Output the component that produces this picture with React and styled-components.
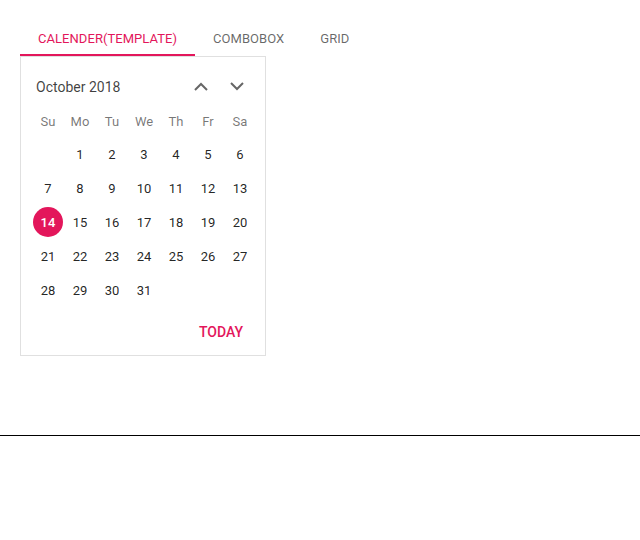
import React from "react";
import styled, { createGlobalStyle } from "styled-components";

const Global = createGlobalStyle`
  html, body { margin: 0; padding: 0; background: #fff; }
  body { font-family: Roboto, "Noto Sans", sans-serif; }
  * { box-sizing: border-box; }
`;

const PINK = "#e3165b";

const Section = styled.section`
  height: 436px;
  padding: 20px 20px 0;
  border-bottom: 1px solid #000;
`;

const TabBar = styled.div`
  display: flex;
  height: 36px;
`;

const Tab = styled.div`
  display: flex;
  align-items: center;
  padding: 2px 18px 0;
  font-size: 13px;
  font-weight: 400;
  letter-spacing: 0.05px;
  color: ${(p) => (p.$active ? PINK : "rgba(0,0,0,0.6)")};
  border-bottom: 2px solid ${(p) => (p.$active ? PINK : "transparent")};
`;

const Calendar = styled.div`
  width: 246px;
  height: 300px;
  border: 1px solid #e0e0e0;
  padding: 10px 9px 0 11px;
  display: flex;
  flex-direction: column;
`;

const Header = styled.div`
  display: flex;
  align-items: center;
  height: 39px;
  padding: 0 1px 0 4px;
`;

const Title = styled.div`
  flex: 1;
  font-size: 14px;
  color: rgba(0,0,0,0.75);
`;

const NavButton = styled.span`
  width: 36px;
  height: 36px;
  display: flex;
  align-items: center;
  justify-content: center;
`;

const Grid = styled.div`
  display: grid;
  grid-template-columns: repeat(7, 32px);
`;

const DayName = styled.div`
  height: 31px;
  display: flex;
  align-items: center;
  justify-content: center;
  font-size: 13px;
  color: rgba(0,0,0,0.54);
`;

const Cell = styled.div`
  height: 34px;
  display: flex;
  align-items: center;
  justify-content: center;
`;

const Day = styled.span`
  width: 30px;
  height: 30px;
  border-radius: 50%;
  display: flex;
  align-items: center;
  justify-content: center;
  font-size: 13px;
  font-weight: ${(p) => (p.$today ? 500 : 400)};
  color: ${(p) => (p.$today ? "#fff" : "rgba(0,0,0,0.87)")};
  background: ${(p) => (p.$today ? PINK : "transparent")};
`;

const Footer = styled.div`
  flex: 1;
  display: flex;
  justify-content: flex-end;
  align-items: center;
  padding: 2px 13px 0 0;
`;

const TodayBtn = styled.span`
  font-size: 14px;
  font-weight: 500;
  color: ${PINK};
`;

const Chevron = ({ up }) => (
  <svg width="14" height="9" viewBox="0 0 14 9">
    <polyline
      points={up ? "1,8 7,2 13,8" : "1,1 7,7 13,1"}
      fill="none"
      stroke="rgba(0,0,0,0.6)"
      strokeWidth="2"
    />
  </svg>
);

const names = ["Su", "Mo", "Tu", "We", "Th", "Fr", "Sa"];
const cells = [null, ...Array.from({ length: 31 }, (_, i) => i + 1)];

export default function App() {
  return (
    <>
      <Global />
      <Section>
        <TabBar>
          <Tab $active>CALENDER(TEMPLATE)</Tab>
          <Tab>COMBOBOX</Tab>
          <Tab>GRID</Tab>
        </TabBar>
        <Calendar>
          <Header>
            <Title>October 2018</Title>
            <NavButton><Chevron up /></NavButton>
            <NavButton><Chevron /></NavButton>
          </Header>
          <Grid>
            {names.map((n) => (
              <DayName key={n}>{n}</DayName>
            ))}
            {cells.map((d, i) => (
              <Cell key={i}>
                {d && <Day $today={d === 14}>{d}</Day>}
              </Cell>
            ))}
          </Grid>
          <Footer>
            <TodayBtn>TODAY</TodayBtn>
          </Footer>
        </Calendar>
      </Section>
    </>
  );
}
